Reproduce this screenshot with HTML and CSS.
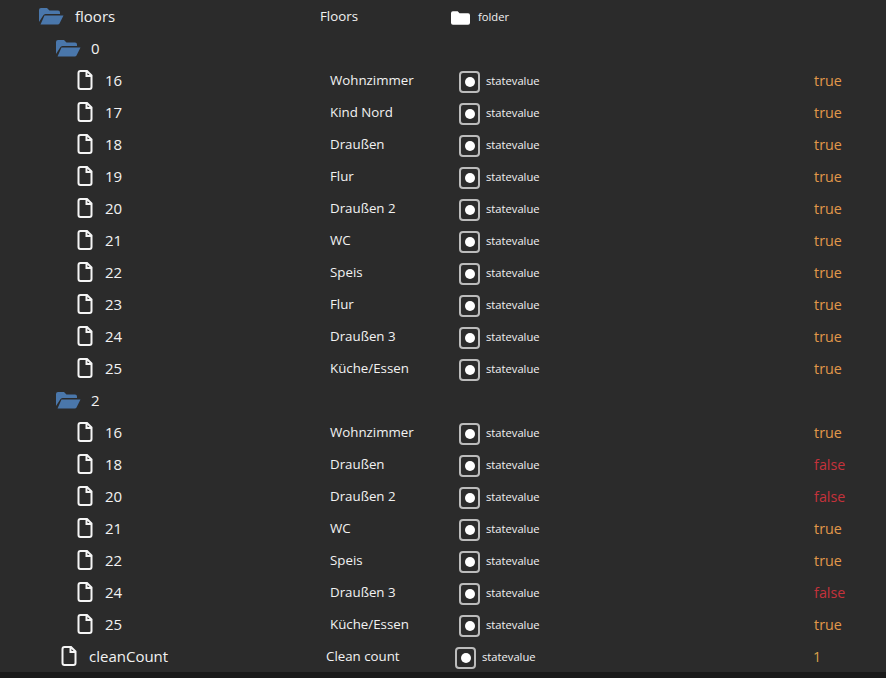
FILE: index.html
```html
<!DOCTYPE html>
<html lang="de">
<head>
<meta charset="utf-8">
<title>floors</title>
<link rel="stylesheet" href="styles.css">
</head>
<body>
<svg class="defs" width="0" height="0">
  <symbol id="open" viewBox="0 0 26 18"><path d="M1 15V3q0-2 2-2h6l2.500 2.500H20q2 0 2 2V7H7.500q-1.600 0-2.300 1.500Z"/><path d="M6.500 8.500H25.500L21.500 16.500q-.5 1-1.800 1H2.500Z"/></symbol>
  <symbol id="file" viewBox="0 0 16 20"><path d="M1.500 3q0-2 2-2H10l4.500 4.500V17q0 2-2 2h-9q-2 0-2-2Z M9.500 1.500V6H14.500" fill="none" stroke="currentColor" stroke-width="2"/></symbol>
  <symbol id="closed" viewBox="0 0 20 14"><path d="M0 2q0-2 2-2h5l2 2h9q2 0 2 2v8q0 2-2 2H2q-2 0-2-2Z"/></symbol>
</svg>
<main class="tree">
  <div class="row top"><svg class="folder"><use href="#open"/></svg><span class="name">floors</span><span class="label">Floors</span><span class="type"><svg class="closed"><use href="#closed"/></svg><span class="kind">folder</span></span></div>
  <div class="row sub"><svg class="folder"><use href="#open"/></svg><span class="name">0</span></div>
  <div class="row leaf"><svg class="doc"><use href="#file"/></svg><span class="name">16</span><span class="label">Wohnzimmer</span><span class="type"><span class="state"><i></i></span><span class="kind">statevalue</span></span><span class="value on">true</span></div>
  <div class="row leaf"><svg class="doc"><use href="#file"/></svg><span class="name">17</span><span class="label">Kind Nord</span><span class="type"><span class="state"><i></i></span><span class="kind">statevalue</span></span><span class="value on">true</span></div>
  <div class="row leaf"><svg class="doc"><use href="#file"/></svg><span class="name">18</span><span class="label">Draußen</span><span class="type"><span class="state"><i></i></span><span class="kind">statevalue</span></span><span class="value on">true</span></div>
  <div class="row leaf"><svg class="doc"><use href="#file"/></svg><span class="name">19</span><span class="label">Flur</span><span class="type"><span class="state"><i></i></span><span class="kind">statevalue</span></span><span class="value on">true</span></div>
  <div class="row leaf"><svg class="doc"><use href="#file"/></svg><span class="name">20</span><span class="label">Draußen 2</span><span class="type"><span class="state"><i></i></span><span class="kind">statevalue</span></span><span class="value on">true</span></div>
  <div class="row leaf"><svg class="doc"><use href="#file"/></svg><span class="name">21</span><span class="label">WC</span><span class="type"><span class="state"><i></i></span><span class="kind">statevalue</span></span><span class="value on">true</span></div>
  <div class="row leaf"><svg class="doc"><use href="#file"/></svg><span class="name">22</span><span class="label">Speis</span><span class="type"><span class="state"><i></i></span><span class="kind">statevalue</span></span><span class="value on">true</span></div>
  <div class="row leaf"><svg class="doc"><use href="#file"/></svg><span class="name">23</span><span class="label">Flur</span><span class="type"><span class="state"><i></i></span><span class="kind">statevalue</span></span><span class="value on">true</span></div>
  <div class="row leaf"><svg class="doc"><use href="#file"/></svg><span class="name">24</span><span class="label">Draußen 3</span><span class="type"><span class="state"><i></i></span><span class="kind">statevalue</span></span><span class="value on">true</span></div>
  <div class="row leaf"><svg class="doc"><use href="#file"/></svg><span class="name">25</span><span class="label">Küche/Essen</span><span class="type"><span class="state"><i></i></span><span class="kind">statevalue</span></span><span class="value on">true</span></div>
  <div class="row sub"><svg class="folder"><use href="#open"/></svg><span class="name">2</span></div>
  <div class="row leaf"><svg class="doc"><use href="#file"/></svg><span class="name">16</span><span class="label">Wohnzimmer</span><span class="type"><span class="state"><i></i></span><span class="kind">statevalue</span></span><span class="value on">true</span></div>
  <div class="row leaf"><svg class="doc"><use href="#file"/></svg><span class="name">18</span><span class="label">Draußen</span><span class="type"><span class="state"><i></i></span><span class="kind">statevalue</span></span><span class="value off">false</span></div>
  <div class="row leaf"><svg class="doc"><use href="#file"/></svg><span class="name">20</span><span class="label">Draußen 2</span><span class="type"><span class="state"><i></i></span><span class="kind">statevalue</span></span><span class="value off">false</span></div>
  <div class="row leaf"><svg class="doc"><use href="#file"/></svg><span class="name">21</span><span class="label">WC</span><span class="type"><span class="state"><i></i></span><span class="kind">statevalue</span></span><span class="value on">true</span></div>
  <div class="row leaf"><svg class="doc"><use href="#file"/></svg><span class="name">22</span><span class="label">Speis</span><span class="type"><span class="state"><i></i></span><span class="kind">statevalue</span></span><span class="value on">true</span></div>
  <div class="row leaf"><svg class="doc"><use href="#file"/></svg><span class="name">24</span><span class="label">Draußen 3</span><span class="type"><span class="state"><i></i></span><span class="kind">statevalue</span></span><span class="value off">false</span></div>
  <div class="row leaf"><svg class="doc"><use href="#file"/></svg><span class="name">25</span><span class="label">Küche/Essen</span><span class="type"><span class="state"><i></i></span><span class="kind">statevalue</span></span><span class="value on">true</span></div>
  <div class="row count"><svg class="doc"><use href="#file"/></svg><span class="name">cleanCount</span><span class="label">Clean count</span><span class="type"><span class="state"><i></i></span><span class="kind">statevalue</span></span><span class="value num">1</span></div>
</main>
</body>
</html>
```
FILE: styles.css
```css
html, body {
  margin: 0;
  height: 100%;
  background: #1a1a1a;
  overflow: hidden;
}
.defs { position: absolute; }
.tree {
  background: #2b2b2b;
  color: #f2f2f2;
  font-family: "Open Sans", "Noto Sans", sans-serif;
  height: 672px;
}
.row {
  display: flex;
  align-items: center;
  height: 32px;
}
.folder { width: 26px; height: 18px; fill: #4a77ab; flex: none; }
.doc { width: 16px; height: 20px; color: #f5f5f5; flex: none; }
.name { font-size: 15px; flex: none; }
.label { font-size: 13.300px; flex: none; }
.type { display: flex; align-items: center; flex: none; }
.kind { font-size: 11.200px; }
.value { font-size: 14.300px; flex: none; }
.on { color: #e2984a; }
.off { color: #c5323b; }
.num { color: #d9a24a; }

.top { padding-left: 38px; }
.top .name { margin-left: 11px; width: 245px; }
.top .label { width: 131px; }
.sub { padding-left: 55px; }
.sub .name { margin-left: 10px; }
.leaf { padding-left: 77px; }
.leaf .name { margin-left: 12px; width: 225px; }
.leaf .label { width: 129px; }
.count { padding-left: 61px; }
.count .name { margin-left: 12px; width: 237px; }
.count .label { width: 129px; }
.leaf .value { margin-left: 274.500px; }
.count .value { margin-left: 277.500px; }

.closed { width: 19px; height: 14px; fill: #fff; margin-right: 8px; margin-top: 3px; }
.state {
  width: 17px;
  height: 18px;
  border: 2px solid #bcbcbc;
  border-radius: 4px;
  display: flex;
  align-items: center;
  justify-content: center;
  margin-right: 6px;
  margin-top: 3px;
}
.state i {
  width: 10px;
  height: 10px;
  border-radius: 50%;
  background: #fff;
}
```
